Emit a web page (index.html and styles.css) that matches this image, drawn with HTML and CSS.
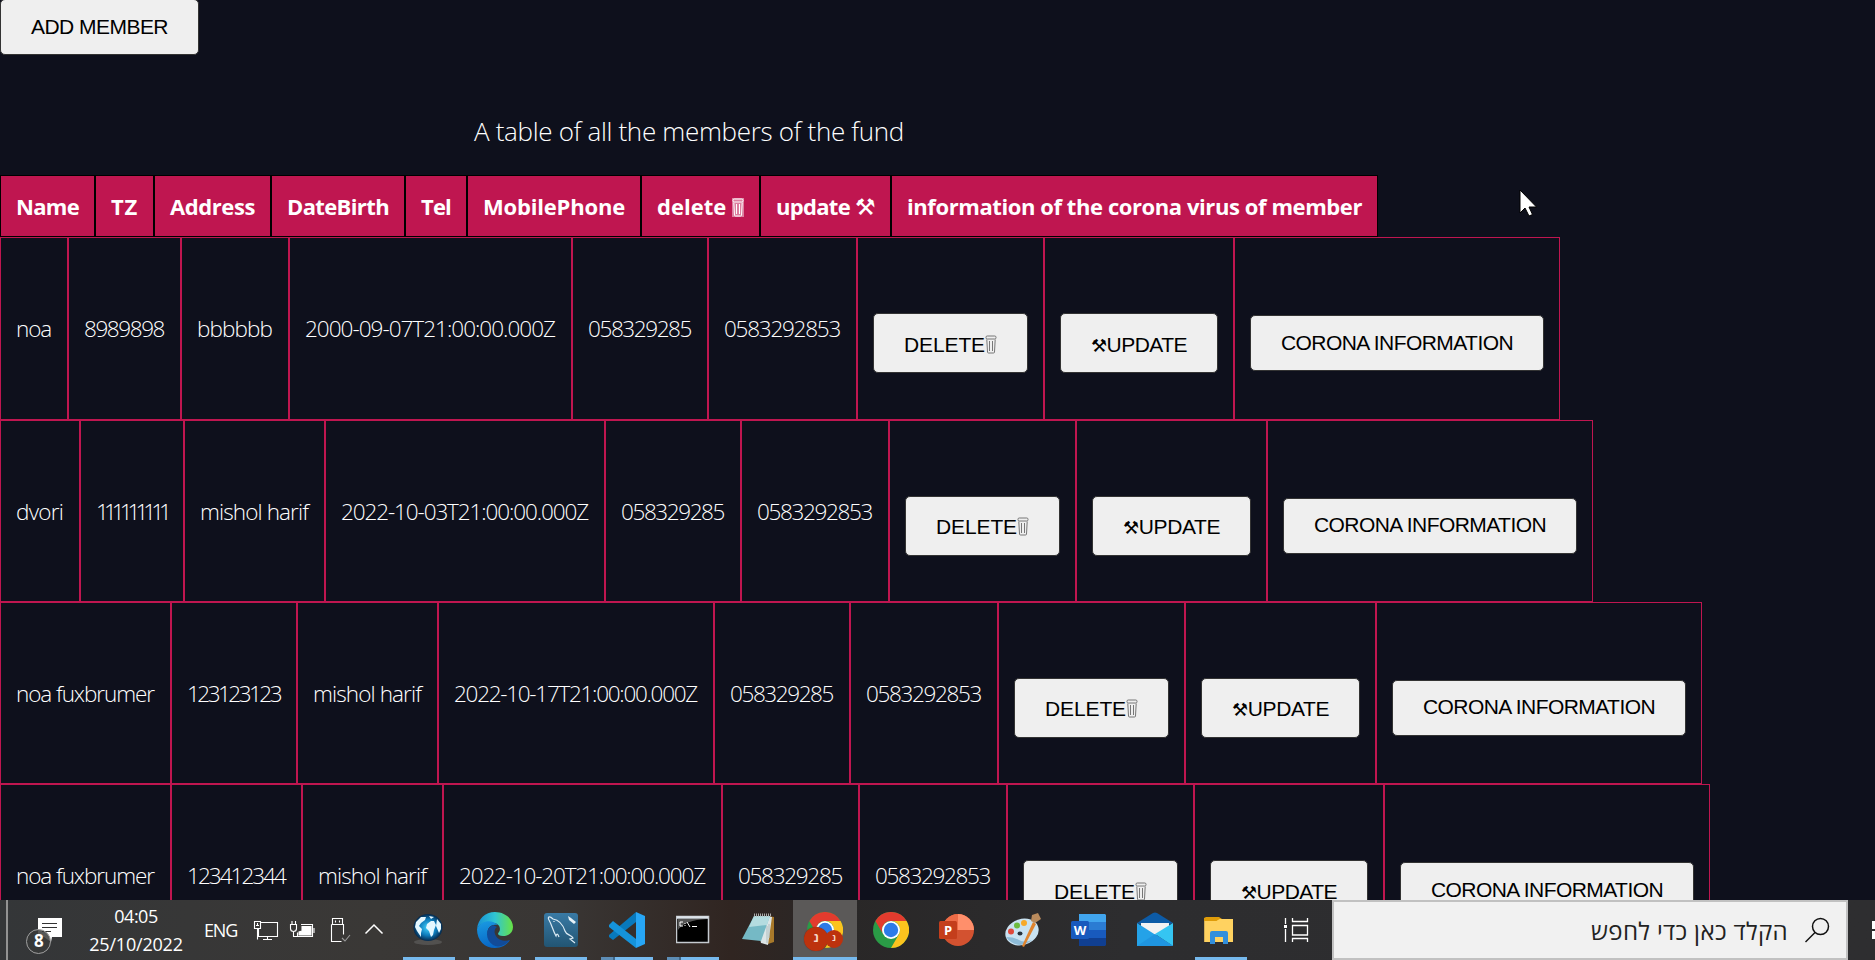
FILE: index.html
```html
<!DOCTYPE html>
<html lang="en">
<head>
<meta charset="utf-8">
<title>Members of the fund</title>
<link rel="stylesheet" href="styles.css">
</head>
<body>
<svg class="defs" width="0" height="0">
  <symbol id="bin" viewBox="0 0 12 19"><rect x="1" y="1" width="10" height="3" rx="1.200" fill="none" stroke="currentColor"/><path d="M1.800 4.500 2.500 17q0 1 1 1h5q1 0 1-1l.7-12.500M4.500 6v10M7.500 6v10" fill="none" stroke="currentColor"/></symbol>
  <symbol id="chrome" viewBox="0 0 36 36"><circle cx="18" cy="18" r="18" fill="#2a9b46"/><path d="M2.400 9A18 18 0 0 1 33.600 9L18 9a9 9 0 0 0-7.800 13.500z" fill="#e33b2e"/><path d="M33.600 9A18 18 0 0 1 18 36l7.800-13.500A9 9 0 0 0 18 9z" fill="#fcc31e"/><circle cx="18" cy="18" r="9" fill="#fff"/><circle cx="18" cy="18" r="7.200" fill="#2d7be8"/></symbol>
</svg>
<main class="page">
  <button class="btn add"><span class="fit">ADD MEMBER</span></button>
  <h1 class="caption"><span class="fit">A table of all the members of the fund</span></h1>
  <section class="table">
    <div class="row head">
      <div class="cell"><span class="fit">Name</span></div><div class="cell"><span class="fit">TZ</span></div><div class="cell"><span class="fit">Address</span></div><div class="cell"><span class="fit">DateBirth</span></div><div class="cell"><span class="fit">Tel</span></div><div class="cell"><span class="fit">MobilePhone</span></div><div class="cell"><span class="fit">delete <svg class="bin"><use href="#bin"/></svg></span></div><div class="cell"><span class="fit">update <i class="tool">⚒</i></span></div><div class="cell"><span class="fit">information of the corona virus of member</span></div>
    </div>
    <div class="row r1">
      <div class="cell"><span class="fit">noa</span></div><div class="cell"><span class="fit">8989898</span></div><div class="cell"><span class="fit">bbbbbb</span></div><div class="cell"><span class="fit">2000-09-07T21:00:00.000Z</span></div><div class="cell"><span class="fit">058329285</span></div><div class="cell"><span class="fit">0583292853</span></div>
      <div class="cell act"><button class="btn tall"><span class="fit">DELETE<svg class="bin"><use href="#bin"/></svg></span></button></div><div class="cell act"><button class="btn tall"><span class="fit"><i class="tool">⚒</i>UPDATE</span></button></div><div class="cell act"><button class="btn"><span class="fit">CORONA INFORMATION</span></button></div>
    </div>
    <div class="row r2">
      <div class="cell"><span class="fit">dvori</span></div><div class="cell"><span class="fit">111111111</span></div><div class="cell"><span class="fit">mishol harif</span></div><div class="cell"><span class="fit">2022-10-03T21:00:00.000Z</span></div><div class="cell"><span class="fit">058329285</span></div><div class="cell"><span class="fit">0583292853</span></div>
      <div class="cell act"><button class="btn tall"><span class="fit">DELETE<svg class="bin"><use href="#bin"/></svg></span></button></div><div class="cell act"><button class="btn tall"><span class="fit"><i class="tool">⚒</i>UPDATE</span></button></div><div class="cell act"><button class="btn"><span class="fit">CORONA INFORMATION</span></button></div>
    </div>
    <div class="row r3">
      <div class="cell"><span class="fit">noa fuxbrumer</span></div><div class="cell"><span class="fit">123123123</span></div><div class="cell"><span class="fit">mishol harif</span></div><div class="cell"><span class="fit">2022-10-17T21:00:00.000Z</span></div><div class="cell"><span class="fit">058329285</span></div><div class="cell"><span class="fit">0583292853</span></div>
      <div class="cell act"><button class="btn tall"><span class="fit">DELETE<svg class="bin"><use href="#bin"/></svg></span></button></div><div class="cell act"><button class="btn tall"><span class="fit"><i class="tool">⚒</i>UPDATE</span></button></div><div class="cell act"><button class="btn"><span class="fit">CORONA INFORMATION</span></button></div>
    </div>
    <div class="row r4">
      <div class="cell"><span class="fit">noa fuxbrumer</span></div><div class="cell"><span class="fit">123412344</span></div><div class="cell"><span class="fit">mishol harif</span></div><div class="cell"><span class="fit">2022-10-20T21:00:00.000Z</span></div><div class="cell"><span class="fit">058329285</span></div><div class="cell"><span class="fit">0583292853</span></div>
      <div class="cell act"><button class="btn tall"><span class="fit">DELETE<svg class="bin"><use href="#bin"/></svg></span></button></div><div class="cell act"><button class="btn tall"><span class="fit"><i class="tool">⚒</i>UPDATE</span></button></div><div class="cell act"><button class="btn"><span class="fit">CORONA INFORMATION</span></button></div>
    </div>
  </section>
</main>
<footer class="taskbar">
  <div class="notify">
    <svg width="40" height="40" viewBox="0 0 40 40"><path d="M14 2h24v19H28l-1 5-7-5h-6z" fill="#fff"/><path d="M18 7.500h15M18 11.500h15M18 15.500h9" stroke="#333" fill="none"/><circle cx="14.500" cy="25.500" r="12" fill="#38393a" fill-opacity=".85" stroke="#a0a0a0"/></svg>
    <span class="count">8</span>
  </div>
  <div class="clock"><span>04:05</span><span class="date">25/10/2022</span></div>
  <div class="lang">ENG</div>
  <svg class="tray" width="132" height="30" viewBox="252 915 132 30" fill="none" stroke="#fff" stroke-width="1.100">
    <path d="M260.500 922.500h17v14h-19v-8M263 939.500h9M267.500 937v2.500M254.500 921.500h6v7h-6zM257.500 928.500v11M256 925.500h3M257.500 923v3"/>
    <path d="M301 924.500h11.500v12h-15v-4M314 928v5"/><path d="M302 926.500h9v8.500h-12v-3l3-1z" fill="#fff"/><path d="M290.500 924.500h6v4q0 3-3 3t-3-3zM292 921v3.500M295.500 921v3.500M293.500 931.500v5h4"/>
    <path d="M332.500 918.500h10v6h-10zM331.500 924.500h12v10M331.500 924.500v17h10M335.500 920.500v2M339.500 920.500v2"/><path d="m342 938 3 3 5-6" stroke="#999"/>
    <path d="m365.500 933.500 8.500-8.500 8.500 8.500" stroke-width="1.500"/>
  </svg>
  <nav class="apps">
    <div class="app open"><svg width="36" height="36"><defs><radialGradient id="gl"><stop stop-color="#42d4ff"/><stop offset=".6" stop-color="#0c79b9"/><stop offset="1" stop-color="#06294c"/></radialGradient></defs><ellipse cx="17" cy="30" rx="14" ry="3" fill="#777" opacity=".4"/><ellipse cx="17" cy="15.500" rx="14.500" ry="13.500" fill="url(#gl)"/><path d="m5 10 5-5 5 0-1 3-4 3-2 3 3 3-1 4 0 4-4-6-2-4zM16 12l4-3 3 0 2 4-2 5-1 5-2 2-2-6-3-3zM26 7l4 5 0 5-2 4-3-7zM18 4l5 1-3 2z" fill="#e4f7ff"/></svg></div>
    <div class="app open"><svg width="36" height="36"><defs><linearGradient id="e1"><stop stop-color="#1690d6"/><stop offset=".5" stop-color="#30c4d4"/><stop offset="1" stop-color="#68e344"/></linearGradient><linearGradient id="e2" x2=".3" y2="1"><stop stop-color="#1a9be2"/><stop offset="1" stop-color="#0867c6"/></linearGradient></defs><path d="M0 17C1 7 8 0 18 0s18 7 18 15c0 6-5 9-10 9-5 0-6-2-4-4 2-3 1-8-5-9C9 9 3 11 0 17z" fill="url(#e1)"/><path d="M0 17C4 8 15 7 21 13c-8-2-13 5-9 12 4 6 12 9 21 3-3 5-9 8-15 8C8 36 0 29 0 17z" fill="url(#e2)"/><path d="M16 13c-8 3-8 15 0 20 5 3 12 1 17-5-5 2-12 0-14-4-2-3-2-7 1-9z" fill="#124b98"/></svg></div>
    <div class="app open"><svg width="34" height="36"><defs><linearGradient id="ms" x2="0" y2="1"><stop stop-color="#397aa5"/><stop offset="1" stop-color="#225573"/></linearGradient></defs><rect y="1" width="34" height="34" rx="3" fill="url(#ms)"/><path d="M15 25c-1-3-2-4-3-1-3-5-4-11-7-16-2-4 1-4 4-1 6 1 10 6 12 12 1 4 7 4 8 7l-3 1 5 4M10 9v1" fill="none" stroke="#dcebf4" stroke-width="1.200"/><path d="m24 4 1 4 5 4 2-2-5-4z" fill="#e7f2f8"/></svg></div>
    <div class="app open multi"><svg width="36" height="36"><path d="M27 0v10L4 28l-4-3v-2z" fill="#0879bd"/><path d="m0 13 4-4 23 18v9L0 15z" fill="#1593db"/><path d="m27 0 9 4v28l-9 4z" fill="#27a6f5"/></svg></div>
    <div class="app open multi"><svg width="34" height="36"><rect x=".5" y="4.500" width="32" height="26" fill="#000" stroke="#c5cad0" stroke-width="1.500"/><path d="M1 5.500h31" stroke="#dce3ea" stroke-width="2.500"/><path d="M2 7h29q-22 1-29 11z" fill="#555"/><path d="M7 10H4v4h3M9 11v1M9 13v1M11 10l3 5M16 14.500h5" fill="none" stroke="#fff"/></svg></div>
    <div class="app"><svg width="36" height="36"><path d="m27 4 6 1 0 25-6 2z" fill="#a8792a"/><path d="M14 4 31 5l-4 28-7-2z" fill="#dce5e6"/><path d="M13 4h16l-9 25L1 27z" fill="#75b9c5"/><path d="M13 4h16l-3 9-18 2z" fill="#b4dce0"/><path d="M13 3h17" stroke="#aaa" stroke-width="3" stroke-dasharray="1 1"/><path d="M26 14v17M28 12v14" stroke="#aebdbe"/></svg></div>
    <div class="app active"><svg width="36" height="36"><use href="#chrome"/></svg><span class="who big">נ</span><span class="who small">נ</span></div>
    <div class="app"><svg width="36" height="36"><use href="#chrome"/></svg></div>
    <div class="app"><svg width="36" height="36"><circle cx="19" cy="18" r="16" fill="#d35230"/><path d="M19 2a16 16 0 0 1 16 16H19z" fill="#ff8f6b"/><path d="M3 18A16 16 0 0 1 19 2v16z" fill="#ed6c47"/><rect x="0" y="9" width="18" height="18" rx="1.500" fill="#c43e1c"/></svg><b class="letter">P</b></div>
    <div class="app"><svg width="38" height="36"><ellipse cx="18" cy="20" rx="17" ry="13" transform="rotate(-18 18 20)" fill="#c9e2f1"/><path d="M2 25q5 7 14 8 8-1 12-5-8 3-13 0T2 25z" fill="#8dbbd7"/><ellipse cx="16" cy="21.500" rx="2.500" ry="2" fill="#27323c"/><circle cx="7" cy="19.500" r="3" fill="#e0483b"/><circle cx="13" cy="13.500" r="3" fill="#6dbb3e"/><circle cx="20" cy="11" r="3" fill="#f7a929"/><path d="m29 10 3 2-12 23-2-1z" fill="#e0842e"/><path d="m28 3 6-2 3 6-6 4-4-2z" fill="#b98a5c"/></svg></div>
    <div class="app"><svg width="36" height="36"><path d="M8 2h26l1 1v7H8z" fill="#41a5ee"/><path d="M8 10h27v8H8z" fill="#2b7cd3"/><path d="M8 18h27v8H8z" fill="#185abd"/><path d="M8 26h27v7l-1 1H8z" fill="#103f91"/><rect y="9" width="18" height="18" rx="1.500" fill="#185abd"/></svg><b class="letter">W</b></div>
    <div class="app"><svg width="36" height="36"><path d="M0 11 16 1q2-1 4 0l16 10-18 8z" fill="#0d5ba6"/><path d="M4 11h28v12H4z" fill="#f2f2f2"/><path d="M0 11v23h36z" fill="#24a2e8"/><path d="M36 11v23L18 22z" fill="#35c5f2"/><path d="M0 34h36L18 22z" fill="#1f95e0"/></svg></div>
    <div class="app open files"><svg width="36" height="36"><path d="M6 5h10l3 2h-1v5H6z" fill="#df9c09"/><path d="M6 9h10l3-2h11v23H6z" fill="#ffd260" transform="translate(-6 0) scale(1.200 1)"/><path d="M6 5h10l2 2-2 2H4V6z" fill="#df9c09" transform="translate(-3 0)"/><path d="M7 32V21q0-2 2-2h14q2 0 2 2v11h-5v-7h-8v7z" fill="#328fdc"/></svg></div>
  </nav>
  <svg class="views" width="25" height="24" fill="none" stroke="#fff" stroke-width="1.300"><path d="M1.500 0v6M1.500 11v13M8.500 0v3.500h15V0M8.500 24v-3.500h15V24M8.500 7.500h15v9.500h-15z"/><path d="M0 8.500h3" stroke-width="3"/></svg>
  <div class="search" dir="rtl">
    <svg width="26" height="26" viewBox="0 0 26 26" fill="none" stroke="#111" stroke-width="1.500"><circle cx="16.500" cy="9.500" r="8"/><path d="M11 15.500 1.500 25"/></svg>
    <div class="query"><span class="fit">הקלד כאן כדי לחפש</span></div>
  </div>
  <svg class="start" width="3" height="18"><path d="M0 0h3v8H0zM0 10h3v8H0z" fill="#fff"/></svg>
</footer>
<svg class="cursor" width="20" height="28"><path d="M1 1v23l5-5 4 8 3.500-1.500L10 18h7.500z" fill="#fff" stroke="#000"/></svg>
<script src="fit.js"></script>
</body>
</html>
```
FILE: styles.css
```css
* { box-sizing: border-box; }
body { margin: 0; height: 960px; overflow: hidden; display: flex; flex-direction: column; background: #0e101c; color: #fff; font-family: "Open Sans", "Noto Sans", sans-serif; }
.defs { position: absolute; }
.page { height: 900px; overflow: hidden; flex: none; }
.fit { display: inline-block; white-space: nowrap; }

.btn { display: flex; align-items: center; height: 56px; width: 100%; padding: 0 30px 1px; border: 1px solid #333; border-radius: 5px; background: #efefef; color: #000; font: 21px "Liberation Sans", Arial, sans-serif; }
.add { width: 199px; height: 56px; margin-top: -1px; }
.tall { height: 60px; padding-top: 3px; padding-bottom: 0; }
.caption { width: 430px; margin: 58px 0 0 474px; height: 37px; font-size: 26px; line-height: 37px; font-weight: 300; }

.table { margin-top: 25px; }
.row { display: grid; height: 183px; width: max-content; }
.cell { display: flex; align-items: center; padding: 0 16px 0 15px; border: 1px solid #bf1650; font-size: 22.5px; font-weight: 320; min-width: 0; }
.act { padding: 29px 15px 0; }
.head { height: 62px; grid-template-columns: 95px 59px 117px 134px 62px 174px 119px 131px 487px; }
.head .cell { background: #bf1650; border-color: #000; font-weight: 700; font-size: 22px; padding: 0 15px 1px; }
.r1 { grid-template-columns: 68px 113px 108px 283px 136px 149px 187px 190px 326px; }
.r2 { height: 182px; grid-template-columns: 80px 104px 141px 280px 136px 148px 187px 191px 326px; }
.r3 { height: 182px; grid-template-columns: 171px 126px 141px 276px 136px 148px 187px 191px 326px; }
.r4 { grid-template-columns: 171px 131px 141px 279px 137px 148px 187px 190px 326px; }
.bin { width: 12px; height: 19px; vertical-align: -2px; color: #777; }
.head .bin { color: #fff; background: rgba(255, 255, 255, .45); }
.tool { font: 18px "DejaVu Sans", sans-serif; line-height: 1; }
.head .tool { font-weight: bold; font-size: 23px; }

.taskbar { height: 60px; flex: none; display: flex; align-items: center; background: linear-gradient(90deg, #343638 0, #3a3836 20%, #393634 30%, #302521 39%, #292727 45%, #2d2d2f 60%, #2e2e30 100%); }
.notify { position: relative; width: 60px; height: 60px; margin-left: 6px; padding: 16px 0 0 16px; border-left: 2px solid #929292; }
.count { position: absolute; left: 26px; top: 30px; font-size: 17px; line-height: 22px; font-weight: 700; }
.clock { width: 106px; margin: 0 0 0 17px; text-align: center; font-size: 18px; display: flex; flex-direction: column; line-height: 28px; letter-spacing: -.5px; }
.date { letter-spacing: -.2px; }
.lang { width: 46px; margin-left: 15px; font-size: 18px; letter-spacing: -1.2px; }
.tray { margin-left: 2px; }
.apps { display: flex; margin-left: 12px; }
.app { position: relative; width: 66px; height: 60px; display: flex; align-items: center; justify-content: center; }
.app::after { content: ""; position: absolute; left: 7px; width: 52px; bottom: 0; height: 3px; }
.open::after { background: #76b9ed; }
.multi::after { background: linear-gradient(90deg, #5d8db5 12px, #3f6687 12px 14px, #76b9ed 14px); }
.active { background: linear-gradient(#5b5958, #5b5958) 1px 0 / 64px 60px no-repeat; }
.active::after { left: 1px; width: 64px; background: #76b9ed; }
.who { position: absolute; border-radius: 50%; background: #bd320d; color: #f5d7c8; text-align: center; font-size: 12px; font-weight: 700; }
.big { left: 12px; top: 27px; width: 24px; height: 24px; line-height: 22px; box-shadow: 0 0 1px #622; }
.small { left: 33px; top: 30px; width: 18px; height: 18px; line-height: 16px; font-size: 9px; }
.letter { position: absolute; left: 15px; width: 18px; text-align: center; top: 21px; line-height: 18px; font-size: 13px; }
.views { margin-left: 30px; }
.search { flex: none; width: 516px; height: 60px; margin-left: 23px; padding-right: 16px; display: flex; align-items: center; gap: 16px; background: #f1f1f1; border: 2px solid #c1c1c1; color: #222; }
.query { font-size: 24px; width: 197px; white-space: nowrap; }
.start { margin-left: 24px; }
.cursor { position: absolute; left: 1519px; top: 189px; }
```
FILE: fit.js
```js
// Tracks every label so that it spans the content box of its container.
document.querySelectorAll('.fit').forEach(function (el) {
  var box = el.parentElement;
  var cs = getComputedStyle(box);
  var room = box.clientWidth - parseFloat(cs.paddingLeft) - parseFloat(cs.paddingRight);
  var gap = (room - el.getBoundingClientRect().width) / el.textContent.length;
  el.style.letterSpacing = gap + 'px';
});
```
